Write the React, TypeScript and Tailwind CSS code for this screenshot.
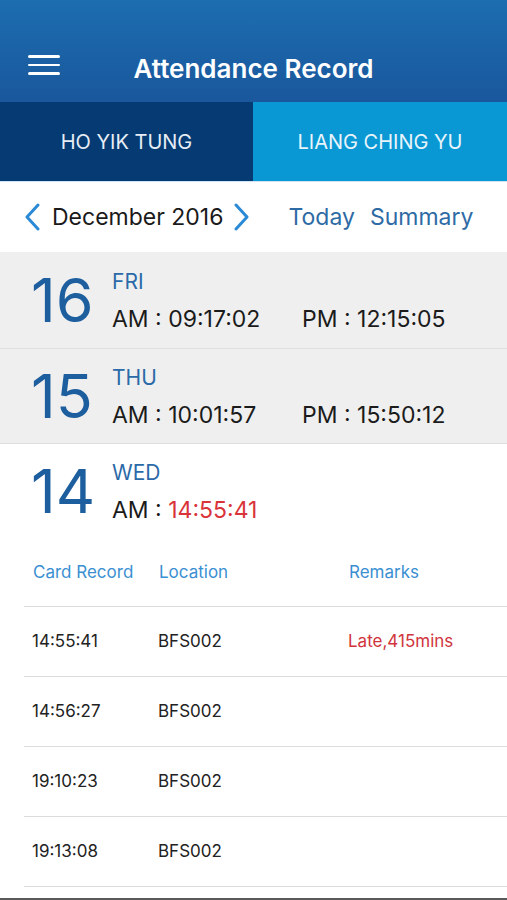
import React from "react";

const font = { fontFamily: "Inter, 'Liberation Sans', sans-serif" };

function DayRow({
  num,
  day,
  am,
  pm,
  late,
  bg,
  h,
}: {
  num: string;
  day: string;
  am: string;
  pm?: string;
  late?: boolean;
  bg: string;
  h: string;
}) {
  return (
    <div className={`flex items-center border-b border-[#dedede] ${bg} ${h}`}>
      <div className="w-[112px] pl-[31px] text-[61px] leading-none text-[#1d5e9e]">{num}</div>
      <div className="flex flex-col">
        <div className="text-[21px] leading-[26px] text-[#2b6aa8]">{day}</div>
        <div className="mt-[11px] flex text-[23px] leading-[26px] text-[#1b1b1b]">
          <div className="w-[190px]">
            AM : <span className={late ? "text-[#d9343a]" : ""}>{am}</span>
          </div>
          {pm && <div>PM : {pm}</div>}
        </div>
      </div>
    </div>
  );
}

function CardRow({ t, loc, rem }: { t: string; loc: string; rem?: string }) {
  return (
    <div className="flex h-[70px] items-center border-b border-[#dcdcdc] pl-[8px] text-[17px] text-[#222]">
      <div className="w-[126px]">{t}</div>
      <div className="w-[190px]">{loc}</div>
      <div className="text-[#d0343c]">{rem}</div>
    </div>
  );
}

export default function App() {
  return (
    <div className="flex h-[900px] w-[507px] flex-col overflow-hidden bg-white" style={font}>
      {/* Header */}
      <div className="grid h-[102px] grid-cols-[1fr_auto_1fr] items-center bg-gradient-to-b from-[#1c6db0] to-[#1a579c] pt-[34px]">
        <div className="-mt-[6px] flex flex-col gap-[6px] pl-[28px]">
          <div className="h-[2.5px] w-[32px] rounded bg-white" />
          <div className="h-[2.5px] w-[32px] rounded bg-white" />
          <div className="h-[2.5px] w-[32px] rounded bg-white" />
        </div>
        <div className="text-[26px] font-semibold text-white">Attendance Record</div>
        <div />
      </div>

      {/* Tabs */}
      <div className="flex h-[79px]">
        <div className="flex w-[253px] items-center justify-center bg-[#053a72] text-[20px] text-[#e6edf5]">
          HO YIK TUNG
        </div>
        <div className="flex flex-1 items-center justify-center bg-[#0a98d4] text-[20px] text-[#e8f4fb]">
          LIANG CHING YU
        </div>
      </div>

      {/* Month nav */}
      <div className="flex h-[71px] items-center border-t border-[#cfe3f3] pl-[22px]">
        <svg width="20" height="28" viewBox="0 0 20 28" className="mr-[10px]">
          <path d="M16 2 L5 14 L16 26" fill="none" stroke="#2a8ad6" strokeWidth="3" strokeLinecap="round" strokeLinejoin="round" />
        </svg>
        <div className="text-[23px] text-[#1a1a1a]">December 2016</div>
        <svg width="20" height="28" viewBox="0 0 20 28" className="ml-[9px]">
          <path d="M4 2 L15 14 L4 26" fill="none" stroke="#2a8ad6" strokeWidth="3" strokeLinecap="round" strokeLinejoin="round" />
        </svg>
        <div className="ml-[36px] text-[23px] text-[#2e6ba5]">Today</div>
        <div className="ml-[15px] text-[23px] text-[#2e6ba5]">Summary</div>
      </div>

      <DayRow num="16" day="FRI" am="09:17:02" pm="12:15:05" bg="bg-[#efefef]" h="h-[97px]" />
      <DayRow num="15" day="THU" am="10:01:57" pm="15:50:12" bg="bg-[#efefef]" h="h-[95px]" />

      <div className="flex h-[95px] items-center">
        <div className="w-[112px] pl-[31px] text-[61px] leading-none text-[#1d5e9e]">14</div>
        <div className="flex flex-col">
          <div className="text-[21px] leading-[26px] text-[#2b6aa8]">WED</div>
          <div className="mt-[11px] text-[23px] leading-[26px] text-[#1b1b1b]">
            AM : <span className="text-[#d9343a]">14:55:41</span>
          </div>
        </div>
      </div>

      {/* Card table */}
      <div className="ml-[24px]">
        <div className="flex h-[68px] items-center border-b border-[#dcdcdc] pl-[9px] text-[17px] text-[#3a8fd2]">
          <div className="w-[126px]">Card Record</div>
          <div className="w-[190px]">Location</div>
          <div>Remarks</div>
        </div>
        <CardRow t="14:55:41" loc="BFS002" rem="Late,415mins" />
        <CardRow t="14:56:27" loc="BFS002" />
        <CardRow t="19:10:23" loc="BFS002" />
        <CardRow t="19:13:08" loc="BFS002" />
      </div>
      <div className="flex-1" />
      <div className="h-[2px] bg-[#5a5a5a]" />
    </div>
  );
}
